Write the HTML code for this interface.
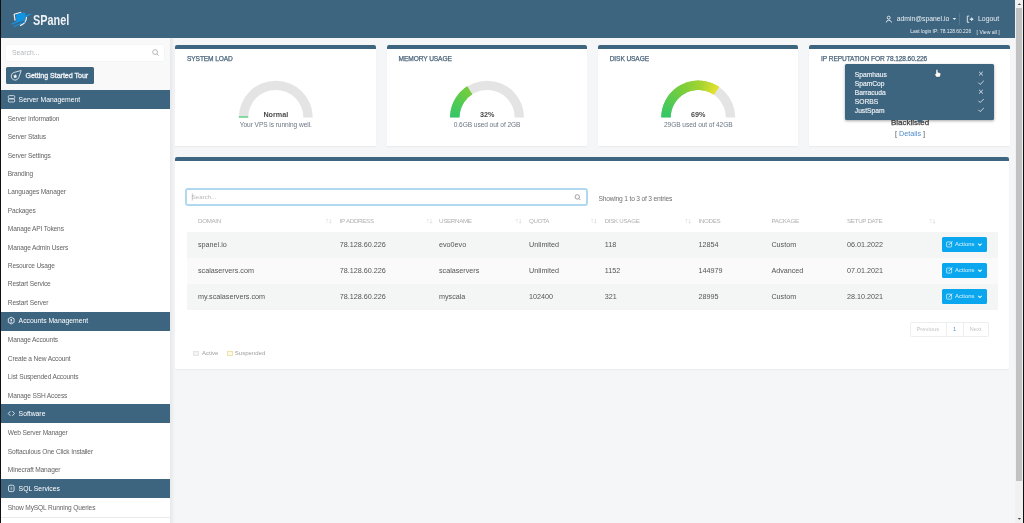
<!DOCTYPE html><html><head><meta charset="utf-8"><style>
*{box-sizing:border-box;margin:0;padding:0}
html,body{width:1024px;height:523px;overflow:hidden}
body{position:relative;will-change:transform;background:#f4f6f7;font-family:"Liberation Sans",sans-serif;color:#555}
.a{position:absolute;white-space:nowrap}
.mh{position:absolute;left:1px;width:169px;height:18.55px;background:#3e6580;color:#fff;font-size:6.8px;line-height:18.55px;padding-left:17.6px;padding-top:0.8px;white-space:nowrap}
.mi{position:absolute;left:1px;width:169px;height:18.55px;color:#606060;font-size:6.35px;line-height:18.55px;padding-left:6.8px;padding-top:1.2px;white-space:nowrap}
.card{position:absolute;top:45px;width:200.4px;height:100.7px;background:#fff;border-radius:2px 2px 0 0;overflow:hidden;box-shadow:0 0.5px 1.5px rgba(0,0,0,.05)}
.bar{position:absolute;left:0;top:0;width:100%;height:4px;background:#3e6580}
.ct{position:absolute;left:11.7px;top:10.2px;font-size:6.6px;letter-spacing:-0.1px;font-weight:400;-webkit-text-stroke:0.25px #4c667b;color:#4c667b;white-space:nowrap}
.th{position:absolute;top:217.4px;font-size:6.2px;letter-spacing:-0.3px;color:#b0b0b0;white-space:nowrap}
.td{position:absolute;font-size:7.2px;color:#555;white-space:nowrap}
.row{position:absolute;left:186.6px;width:811.6px}
.btn{position:absolute;left:942.3px;width:44.8px;height:14.7px;background:#0aa7ee;border-radius:1.5px;color:#fff}
.gv{position:absolute;font-size:7.2px;font-weight:700;color:#4a4a4a;white-space:nowrap;text-align:center;width:100px}
.gs{position:absolute;font-size:6.6px;letter-spacing:-0.07px;color:#6b7784;white-space:nowrap;text-align:center;width:120px}
</style></head><body>
<div class="a" style="left:0;top:0;width:1024px;height:38px;background:#3e6580"></div>
<div class="a" style="left:33.2px;top:11.6px;font-size:14px;font-weight:700;color:#eef2f5;transform:scaleX(0.775);transform-origin:0 0">SPanel</div>
<div class="a" style="left:896.7px;top:15.3px;font-size:6.8px;color:#e8eef2">admin@spanel.io</div>
<div class="a" style="left:978px;top:15.3px;font-size:6.9px;color:#e8eef2">Logout</div>
<div class="a" style="left:910.3px;top:29.2px;font-size:4.9px;color:#e8eef2">Last login IP: 78.128.60.226</div>
<div class="a" style="left:976.6px;top:29.2px;font-size:5.1px;color:#e8eef2">[ View all ]</div>
<div class="a" style="left:959px;top:12.8px;width:0.6px;height:12.6px;background:#547790"></div>
<div class="a" style="left:1px;top:38px;width:169px;height:485px;background:#f9f9f9"></div>
<div class="a" style="left:6px;top:44.5px;width:158.4px;height:16px;background:#fff;border-radius:2px;box-shadow:0 0 0 0.5px #f0f1f2"></div>
<div class="a" style="left:12px;top:48.8px;font-size:6.85px;color:#b3b7bb">Search...</div>
<div class="a" style="left:5.9px;top:67.2px;width:88.1px;height:16.4px;background:#3e6580;border-radius:1.5px"></div>
<div class="a" style="left:25.4px;top:71.8px;font-size:7.15px;letter-spacing:-0.05px;font-weight:400;-webkit-text-stroke:0.3px #f0f3f5;color:#f0f3f5">Getting Started Tour</div>
<div class="a" style="left:1px;top:90px;width:169px;height:433px;background:#fff"></div>
<div class="a" style="left:1px;top:89.70px;width:169px;height:19.15px;background:#3e6580"></div>
<div class="a" style="left:18.6px;top:95.50px;font-size:6.8px;color:#fff">Server Management</div>
<div class="a" style="left:7.8px;top:114.65px;font-size:6.6px;letter-spacing:-0.15px;color:#646464">Server Information</div>
<div class="a" style="left:7.8px;top:133.07px;font-size:6.6px;letter-spacing:-0.15px;color:#646464">Server Status</div>
<div class="a" style="left:7.8px;top:151.50px;font-size:6.6px;letter-spacing:-0.15px;color:#646464">Server Settings</div>
<div class="a" style="left:7.8px;top:169.92px;font-size:6.6px;letter-spacing:-0.15px;color:#646464">Branding</div>
<div class="a" style="left:7.8px;top:188.34px;font-size:6.6px;letter-spacing:-0.15px;color:#646464">Languages Manager</div>
<div class="a" style="left:7.8px;top:206.76px;font-size:6.6px;letter-spacing:-0.15px;color:#646464">Packages</div>
<div class="a" style="left:7.8px;top:225.19px;font-size:6.6px;letter-spacing:-0.15px;color:#646464">Manage API Tokens</div>
<div class="a" style="left:7.8px;top:243.61px;font-size:6.6px;letter-spacing:-0.15px;color:#646464">Manage Admin Users</div>
<div class="a" style="left:7.8px;top:262.03px;font-size:6.6px;letter-spacing:-0.15px;color:#646464">Resource Usage</div>
<div class="a" style="left:7.8px;top:280.45px;font-size:6.6px;letter-spacing:-0.15px;color:#646464">Restart Service</div>
<div class="a" style="left:7.8px;top:298.88px;font-size:6.6px;letter-spacing:-0.15px;color:#646464">Restart Server</div>
<div class="a" style="left:1px;top:311.50px;width:169px;height:19.15px;background:#3e6580"></div>
<div class="a" style="left:18.6px;top:317.30px;font-size:6.8px;color:#fff">Accounts Management</div>
<div class="a" style="left:7.8px;top:336.45px;font-size:6.6px;letter-spacing:-0.15px;color:#646464">Manage Accounts</div>
<div class="a" style="left:7.8px;top:354.86px;font-size:6.6px;letter-spacing:-0.15px;color:#646464">Create a New Account</div>
<div class="a" style="left:7.8px;top:373.28px;font-size:6.6px;letter-spacing:-0.15px;color:#646464">List Suspended Accounts</div>
<div class="a" style="left:7.8px;top:391.69px;font-size:6.6px;letter-spacing:-0.15px;color:#646464">Manage SSH Access</div>
<div class="a" style="left:1px;top:404.30px;width:169px;height:19.15px;background:#3e6580"></div>
<div class="a" style="left:18.6px;top:410.10px;font-size:6.8px;color:#fff">Software</div>
<div class="a" style="left:7.8px;top:429.25px;font-size:6.6px;letter-spacing:-0.15px;color:#646464">Web Server Manager</div>
<div class="a" style="left:7.8px;top:447.87px;font-size:6.6px;letter-spacing:-0.15px;color:#646464">Softaculous One Click Installer</div>
<div class="a" style="left:7.8px;top:466.48px;font-size:6.6px;letter-spacing:-0.15px;color:#646464">Minecraft Manager</div>
<div class="a" style="left:1px;top:479.30px;width:169px;height:19.15px;background:#3e6580"></div>
<div class="a" style="left:18.6px;top:485.10px;font-size:6.8px;color:#fff">SQL Services</div>
<div class="a" style="left:7.8px;top:504.25px;font-size:6.6px;letter-spacing:-0.15px;color:#646464">Show MySQL Running Queries</div>
<div class="a" style="left:1px;top:516.85px;width:169px;height:0.7px;background:#e9ebed"></div>
<div class="a" style="left:170px;top:38px;width:5px;height:485px;background:linear-gradient(to right,#e6e8ea,#f4f6f7)"></div>
<div class="card" style="left:175.3px"><div class="bar"></div><div class="ct">SYSTEM LOAD</div></div>
<div class="card" style="left:386.9px"><div class="bar"></div><div class="ct">MEMORY USAGE</div></div>
<div class="card" style="left:598.0px"><div class="bar"></div><div class="ct">DISK USAGE</div></div>
<div class="card" style="left:809.4px"><div class="bar"></div><div class="ct">IP REPUTATION FOR 78.128.60.226</div></div>
<svg class="a" style="left:0;top:0" width="1024" height="523" viewBox="0 0 1024 523"><path d="M238.80,117.60 A37.0,37.0 0 0 1 312.80,117.60 L303.40,117.60 A27.6,27.6 0 0 0 248.20,117.60 Z" fill="#e4e4e4"/><rect x="238.80" y="116.30" width="9.40" height="1.3" fill="#4fd07a"/></svg>
<svg class="a" style="left:0;top:0" width="1024" height="523" viewBox="0 0 1024 523"><path d="M450.10,117.60 A37.0,37.0 0 0 1 524.10,117.60 L514.70,117.60 A27.6,27.6 0 0 0 459.50,117.60 Z" fill="#e4e4e4"/><path d="M450.10,117.60 A37.0,37.0 0 0 1 450.17,115.30 L459.55,115.89 A27.6,27.6 0 0 0 459.50,117.60 Z" fill="rgb(51, 199, 105)"/><path d="M450.12,116.27 A37.0,37.0 0 0 1 450.28,113.98 L459.63,114.90 A27.6,27.6 0 0 0 459.52,116.61 Z" fill="rgb(54, 199, 104)"/><path d="M450.20,114.95 A37.0,37.0 0 0 1 450.43,112.66 L459.75,113.92 A27.6,27.6 0 0 0 459.57,115.62 Z" fill="rgb(56, 200, 102)"/><path d="M450.31,113.62 A37.0,37.0 0 0 1 450.63,111.35 L459.90,112.94 A27.6,27.6 0 0 0 459.66,114.63 Z" fill="rgb(59, 200, 100)"/><path d="M450.48,112.30 A37.0,37.0 0 0 1 450.88,110.04 L460.08,111.96 A27.6,27.6 0 0 0 459.78,113.65 Z" fill="rgb(61, 200, 99)"/><path d="M450.69,110.99 A37.0,37.0 0 0 1 451.17,108.75 L460.30,111.00 A27.6,27.6 0 0 0 459.94,112.67 Z" fill="rgb(64, 200, 97)"/><path d="M450.96,109.69 A37.0,37.0 0 0 1 451.52,107.46 L460.56,110.04 A27.6,27.6 0 0 0 460.14,111.70 Z" fill="rgb(66, 201, 95)"/><path d="M451.26,108.40 A37.0,37.0 0 0 1 451.90,106.19 L460.84,109.09 A27.6,27.6 0 0 0 460.37,110.74 Z" fill="rgb(69, 201, 94)"/><path d="M451.62,107.12 A37.0,37.0 0 0 1 452.33,104.94 L461.17,108.15 A27.6,27.6 0 0 0 460.63,109.78 Z" fill="rgb(71, 201, 92)"/><path d="M452.01,105.85 A37.0,37.0 0 0 1 452.81,103.70 L461.52,107.23 A27.6,27.6 0 0 0 460.93,108.84 Z" fill="rgb(73, 201, 90)"/><path d="M452.46,104.60 A37.0,37.0 0 0 1 453.33,102.47 L461.91,106.32 A27.6,27.6 0 0 0 461.26,107.90 Z" fill="rgb(76, 202, 89)"/><path d="M452.95,103.36 A37.0,37.0 0 0 1 453.90,101.27 L462.33,105.42 A27.6,27.6 0 0 0 461.62,106.98 Z" fill="rgb(78, 202, 87)"/><path d="M453.48,102.15 A37.0,37.0 0 0 1 454.50,100.09 L462.79,104.54 A27.6,27.6 0 0 0 462.02,106.07 Z" fill="rgb(81, 202, 85)"/><path d="M454.06,100.95 A37.0,37.0 0 0 1 455.15,98.93 L463.27,103.68 A27.6,27.6 0 0 0 462.45,105.18 Z" fill="rgb(83, 202, 84)"/><path d="M454.68,99.78 A37.0,37.0 0 0 1 455.85,97.80 L463.79,102.83 A27.6,27.6 0 0 0 462.91,104.30 Z" fill="rgb(86, 202, 82)"/><path d="M455.34,98.62 A37.0,37.0 0 0 1 456.58,96.69 L464.33,102.00 A27.6,27.6 0 0 0 463.41,103.44 Z" fill="rgb(88, 203, 80)"/><path d="M456.04,97.49 A37.0,37.0 0 0 1 457.35,95.61 L464.91,101.19 A27.6,27.6 0 0 0 463.93,102.60 Z" fill="rgb(91, 203, 79)"/><path d="M456.78,96.39 A37.0,37.0 0 0 1 458.15,94.55 L465.51,100.41 A27.6,27.6 0 0 0 464.48,101.78 Z" fill="rgb(93, 203, 77)"/><path d="M457.56,95.32 A37.0,37.0 0 0 1 459.00,93.53 L466.14,99.64 A27.6,27.6 0 0 0 465.07,100.98 Z" fill="rgb(96, 203, 76)"/><path d="M458.38,94.27 A37.0,37.0 0 0 1 459.88,92.54 L466.80,98.90 A27.6,27.6 0 0 0 465.68,100.20 Z" fill="rgb(98, 204, 74)"/><path d="M459.24,93.26 A37.0,37.0 0 0 1 460.80,91.57 L467.48,98.19 A27.6,27.6 0 0 0 466.32,99.44 Z" fill="rgb(101, 204, 72)"/><path d="M460.13,92.27 A37.0,37.0 0 0 1 461.75,90.65 L468.19,97.49 A27.6,27.6 0 0 0 466.98,98.71 Z" fill="rgb(103, 204, 71)"/><path d="M461.05,91.32 A37.0,37.0 0 0 1 462.74,89.75 L468.93,96.83 A27.6,27.6 0 0 0 467.67,98.00 Z" fill="rgb(106, 204, 69)"/><path d="M462.01,90.40 A37.0,37.0 0 0 1 463.75,88.90 L469.68,96.19 A27.6,27.6 0 0 0 468.39,97.31 Z" fill="rgb(108, 205, 67)"/><path d="M463.01,89.52 A37.0,37.0 0 0 1 464.80,88.08 L470.46,95.58 A27.6,27.6 0 0 0 469.13,96.65 Z" fill="rgb(110, 205, 66)"/><path d="M464.03,88.67 A37.0,37.0 0 0 1 465.87,87.30 L471.26,95.00 A27.6,27.6 0 0 0 469.89,96.02 Z" fill="rgb(113, 205, 64)"/><path d="M465.08,87.86 A37.0,37.0 0 0 1 466.97,86.55 L472.09,94.44 A27.6,27.6 0 0 0 470.68,95.42 Z" fill="rgb(115, 205, 62)"/><path d="M466.17,87.09 A37.0,37.0 0 0 1 467.27,86.36 L472.31,94.30 A27.6,27.6 0 0 0 471.48,94.84 Z" fill="rgb(118, 206, 61)"/></svg>
<svg class="a" style="left:0;top:0" width="1024" height="523" viewBox="0 0 1024 523"><path d="M661.30,117.60 A37.0,37.0 0 0 1 735.30,117.60 L725.90,117.60 A27.6,27.6 0 0 0 670.70,117.60 Z" fill="#e4e4e4"/><path d="M661.30,117.60 A37.0,37.0 0 0 1 661.37,115.34 L670.75,115.91 A27.6,27.6 0 0 0 670.70,117.60 Z" fill="rgb(51, 199, 105)"/><path d="M661.32,116.31 A37.0,37.0 0 0 1 661.47,114.05 L670.83,114.95 A27.6,27.6 0 0 0 670.72,116.64 Z" fill="rgb(54, 199, 104)"/><path d="M661.39,115.01 A37.0,37.0 0 0 1 661.62,112.76 L670.94,113.99 A27.6,27.6 0 0 0 670.77,115.67 Z" fill="rgb(56, 200, 102)"/><path d="M661.50,113.73 A37.0,37.0 0 0 1 661.81,111.49 L671.08,113.04 A27.6,27.6 0 0 0 670.85,114.71 Z" fill="rgb(58, 200, 100)"/><path d="M661.66,112.44 A37.0,37.0 0 0 1 662.04,110.21 L671.26,112.09 A27.6,27.6 0 0 0 670.97,113.75 Z" fill="rgb(61, 200, 99)"/><path d="M661.86,111.16 A37.0,37.0 0 0 1 662.33,108.95 L671.46,111.15 A27.6,27.6 0 0 0 671.12,112.80 Z" fill="rgb(63, 200, 97)"/><path d="M662.11,109.90 A37.0,37.0 0 0 1 662.65,107.70 L671.71,110.21 A27.6,27.6 0 0 0 671.31,111.85 Z" fill="rgb(66, 201, 96)"/><path d="M662.40,108.63 A37.0,37.0 0 0 1 663.02,106.46 L671.98,109.29 A27.6,27.6 0 0 0 671.52,110.91 Z" fill="rgb(68, 201, 94)"/><path d="M662.74,107.39 A37.0,37.0 0 0 1 663.43,105.23 L672.29,108.37 A27.6,27.6 0 0 0 671.77,109.98 Z" fill="rgb(70, 201, 92)"/><path d="M663.12,106.15 A37.0,37.0 0 0 1 663.88,104.02 L672.63,107.47 A27.6,27.6 0 0 0 672.06,109.06 Z" fill="rgb(73, 201, 91)"/><path d="M663.54,104.93 A37.0,37.0 0 0 1 664.38,102.83 L673.00,106.58 A27.6,27.6 0 0 0 672.37,108.15 Z" fill="rgb(75, 201, 89)"/><path d="M664.00,103.72 A37.0,37.0 0 0 1 664.92,101.65 L673.40,105.70 A27.6,27.6 0 0 0 672.72,107.25 Z" fill="rgb(78, 202, 88)"/><path d="M664.51,102.53 A37.0,37.0 0 0 1 665.49,100.49 L673.83,104.84 A27.6,27.6 0 0 0 673.09,106.36 Z" fill="rgb(80, 202, 86)"/><path d="M665.06,101.36 A37.0,37.0 0 0 1 666.11,99.35 L674.29,103.99 A27.6,27.6 0 0 0 673.50,105.48 Z" fill="rgb(82, 202, 84)"/><path d="M665.64,100.20 A37.0,37.0 0 0 1 666.77,98.24 L674.78,103.16 A27.6,27.6 0 0 0 673.94,104.62 Z" fill="rgb(85, 202, 83)"/><path d="M666.27,99.07 A37.0,37.0 0 0 1 667.46,97.15 L675.30,102.35 A27.6,27.6 0 0 0 674.41,103.78 Z" fill="rgb(87, 203, 81)"/><path d="M666.94,97.96 A37.0,37.0 0 0 1 668.20,96.09 L675.85,101.55 A27.6,27.6 0 0 0 674.91,102.95 Z" fill="rgb(90, 203, 80)"/><path d="M667.65,96.88 A37.0,37.0 0 0 1 668.97,95.05 L676.42,100.78 A27.6,27.6 0 0 0 675.43,102.14 Z" fill="rgb(92, 203, 78)"/><path d="M668.39,95.82 A37.0,37.0 0 0 1 669.78,94.03 L677.02,100.02 A27.6,27.6 0 0 0 675.99,101.35 Z" fill="rgb(94, 203, 76)"/><path d="M669.17,94.79 A37.0,37.0 0 0 1 670.62,93.05 L677.65,99.29 A27.6,27.6 0 0 0 676.57,100.58 Z" fill="rgb(97, 204, 75)"/><path d="M669.98,93.78 A37.0,37.0 0 0 1 671.49,92.10 L678.30,98.58 A27.6,27.6 0 0 0 677.18,99.84 Z" fill="rgb(99, 204, 73)"/><path d="M670.83,92.81 A37.0,37.0 0 0 1 672.40,91.18 L678.98,97.89 A27.6,27.6 0 0 0 677.81,99.11 Z" fill="rgb(102, 204, 72)"/><path d="M671.72,91.86 A37.0,37.0 0 0 1 673.34,90.29 L679.68,97.23 A27.6,27.6 0 0 0 678.47,98.40 Z" fill="rgb(104, 204, 70)"/><path d="M672.63,90.95 A37.0,37.0 0 0 1 674.31,89.43 L680.40,96.59 A27.6,27.6 0 0 0 679.15,97.72 Z" fill="rgb(106, 204, 68)"/><path d="M673.58,90.07 A37.0,37.0 0 0 1 675.31,88.61 L681.15,95.98 A27.6,27.6 0 0 0 679.86,97.06 Z" fill="rgb(109, 205, 67)"/><path d="M674.56,89.22 A37.0,37.0 0 0 1 676.34,87.83 L681.92,95.39 A27.6,27.6 0 0 0 680.59,96.43 Z" fill="rgb(111, 205, 65)"/><path d="M675.56,88.41 A37.0,37.0 0 0 1 677.39,87.08 L682.70,94.83 A27.6,27.6 0 0 0 681.34,95.83 Z" fill="rgb(114, 205, 64)"/><path d="M676.60,87.63 A37.0,37.0 0 0 1 678.47,86.36 L683.51,94.30 A27.6,27.6 0 0 0 682.11,95.25 Z" fill="rgb(116, 205, 62)"/><path d="M677.66,86.89 A37.0,37.0 0 0 1 679.57,85.69 L684.33,93.80 A27.6,27.6 0 0 0 682.90,94.69 Z" fill="rgb(119, 206, 60)"/><path d="M678.74,86.19 A37.0,37.0 0 0 1 680.70,85.05 L685.17,93.32 A27.6,27.6 0 0 0 683.71,94.17 Z" fill="rgb(121, 206, 59)"/><path d="M679.85,85.53 A37.0,37.0 0 0 1 681.85,84.46 L686.03,92.88 A27.6,27.6 0 0 0 684.54,93.67 Z" fill="rgb(123, 206, 58)"/><path d="M680.99,84.90 A37.0,37.0 0 0 1 683.02,83.90 L686.90,92.46 A27.6,27.6 0 0 0 685.39,93.21 Z" fill="rgb(126, 207, 57)"/><path d="M682.14,84.32 A37.0,37.0 0 0 1 684.20,83.39 L687.79,92.08 A27.6,27.6 0 0 0 686.25,92.77 Z" fill="rgb(128, 207, 57)"/><path d="M683.31,83.77 A37.0,37.0 0 0 1 685.41,82.92 L688.68,91.73 A27.6,27.6 0 0 0 687.12,92.37 Z" fill="rgb(131, 207, 56)"/><path d="M684.51,83.27 A37.0,37.0 0 0 1 686.63,82.49 L689.59,91.41 A27.6,27.6 0 0 0 688.01,91.99 Z" fill="rgb(133, 208, 56)"/><path d="M685.71,82.81 A37.0,37.0 0 0 1 687.86,82.10 L690.51,91.12 A27.6,27.6 0 0 0 688.91,91.65 Z" fill="rgb(136, 208, 55)"/><path d="M686.94,82.39 A37.0,37.0 0 0 1 689.11,81.76 L691.45,90.86 A27.6,27.6 0 0 0 689.82,91.33 Z" fill="rgb(138, 208, 55)"/><path d="M688.18,82.01 A37.0,37.0 0 0 1 690.37,81.46 L692.38,90.64 A27.6,27.6 0 0 0 690.75,91.05 Z" fill="rgb(141, 209, 55)"/><path d="M689.43,81.68 A37.0,37.0 0 0 1 691.64,81.20 L693.33,90.45 A27.6,27.6 0 0 0 691.68,90.81 Z" fill="rgb(143, 209, 54)"/><path d="M690.69,81.39 A37.0,37.0 0 0 1 692.91,80.99 L694.28,90.29 A27.6,27.6 0 0 0 692.62,90.59 Z" fill="rgb(145, 209, 54)"/><path d="M691.96,81.15 A37.0,37.0 0 0 1 694.20,80.83 L695.24,90.17 A27.6,27.6 0 0 0 693.57,90.41 Z" fill="rgb(148, 210, 53)"/><path d="M693.24,80.95 A37.0,37.0 0 0 1 695.48,80.71 L696.20,90.08 A27.6,27.6 0 0 0 694.52,90.26 Z" fill="rgb(150, 210, 53)"/><path d="M694.52,80.79 A37.0,37.0 0 0 1 696.78,80.63 L697.16,90.02 A27.6,27.6 0 0 0 695.48,90.14 Z" fill="rgb(153, 210, 52)"/><path d="M695.81,80.68 A37.0,37.0 0 0 1 698.07,80.60 L698.13,90.00 A27.6,27.6 0 0 0 696.44,90.06 Z" fill="rgb(155, 211, 52)"/><path d="M697.10,80.62 A37.0,37.0 0 0 1 699.36,80.62 L699.09,90.01 A27.6,27.6 0 0 0 697.41,90.01 Z" fill="rgb(158, 211, 51)"/><path d="M698.39,80.60 A37.0,37.0 0 0 1 700.65,80.67 L700.06,90.06 A27.6,27.6 0 0 0 698.37,90.00 Z" fill="rgb(160, 211, 51)"/><path d="M699.69,80.63 A37.0,37.0 0 0 1 701.94,80.78 L701.02,90.13 A27.6,27.6 0 0 0 699.33,90.02 Z" fill="rgb(163, 212, 50)"/><path d="M700.98,80.70 A37.0,37.0 0 0 1 703.23,80.93 L701.98,90.25 A27.6,27.6 0 0 0 700.30,90.07 Z" fill="rgb(165, 212, 50)"/><path d="M702.27,80.81 A37.0,37.0 0 0 1 704.51,81.12 L702.93,90.39 A27.6,27.6 0 0 0 701.26,90.16 Z" fill="rgb(170, 213, 50)"/><path d="M703.55,80.97 A37.0,37.0 0 0 1 705.78,81.36 L703.88,90.57 A27.6,27.6 0 0 0 702.22,90.28 Z" fill="rgb(174, 214, 49)"/><path d="M704.83,81.18 A37.0,37.0 0 0 1 707.04,81.65 L704.82,90.78 A27.6,27.6 0 0 0 703.17,90.43 Z" fill="rgb(179, 215, 49)"/><path d="M706.10,81.43 A37.0,37.0 0 0 1 708.29,81.97 L705.75,91.03 A27.6,27.6 0 0 0 704.12,90.62 Z" fill="rgb(183, 216, 49)"/><path d="M707.36,81.73 A37.0,37.0 0 0 1 709.53,82.35 L706.68,91.30 A27.6,27.6 0 0 0 705.06,90.84 Z" fill="rgb(188, 217, 49)"/><path d="M708.60,82.06 A37.0,37.0 0 0 1 710.76,82.76 L707.59,91.61 A27.6,27.6 0 0 0 705.99,91.09 Z" fill="rgb(192, 218, 48)"/><path d="M709.84,82.45 A37.0,37.0 0 0 1 711.97,83.22 L708.49,91.95 A27.6,27.6 0 0 0 706.91,91.38 Z" fill="rgb(197, 219, 48)"/><path d="M711.06,82.87 A37.0,37.0 0 0 1 713.16,83.72 L709.39,92.32 A27.6,27.6 0 0 0 707.82,91.69 Z" fill="rgb(201, 220, 48)"/><path d="M712.27,83.34 A37.0,37.0 0 0 1 714.34,84.26 L710.26,92.73 A27.6,27.6 0 0 0 708.72,92.04 Z" fill="rgb(206, 221, 47)"/><path d="M713.46,83.85 A37.0,37.0 0 0 1 715.49,84.84 L711.12,93.16 A27.6,27.6 0 0 0 709.61,92.42 Z" fill="rgb(210, 222, 47)"/><path d="M714.63,84.40 A37.0,37.0 0 0 1 716.63,85.46 L711.97,93.62 A27.6,27.6 0 0 0 710.48,92.83 Z" fill="rgb(215, 223, 47)"/><path d="M715.78,84.99 A37.0,37.0 0 0 1 717.74,86.12 L712.80,94.12 A27.6,27.6 0 0 0 711.34,93.27 Z" fill="rgb(219, 224, 47)"/><path d="M716.91,85.62 A37.0,37.0 0 0 1 718.83,86.82 L713.61,94.64 A27.6,27.6 0 0 0 712.18,93.74 Z" fill="rgb(224, 225, 46)"/><path d="M718.01,86.29 A37.0,37.0 0 0 1 719.10,87.00 L713.81,94.77 A27.6,27.6 0 0 0 713.01,94.24 Z" fill="rgb(228, 226, 46)"/></svg>
<div class="gv" style="left:225.80px;top:109.8px">Normal</div>
<div class="gs" style="left:215.80px;top:120.5px">Your VPS is running well.</div>
<div class="gv" style="left:437.10px;top:109.8px">32%</div>
<div class="gs" style="left:427.10px;top:120.5px">0.6GB used out of 2GB</div>
<div class="gv" style="left:648.30px;top:109.8px">69%</div>
<div class="gs" style="left:638.30px;top:120.5px">29GB used out of 42GB</div>
<div class="a" style="left:870px;top:117.5px;width:80px;text-align:center;font-size:8px;color:#3e3e3e;-webkit-text-stroke:0.25px #3e3e3e">Blacklisted</div>
<div class="a" style="left:870px;top:129px;width:80px;text-align:center;font-size:7.2px;color:#555">[ <span style="color:#4f8ccb">Details</span> ]</div>
<div class="a" style="left:845px;top:64px;width:149px;height:56px;background:#3e6580;border-radius:1.5px;box-shadow:0 1px 3px rgba(0,0,0,.35)"></div>
<div class="a" style="left:916.7px;top:120px;width:0;height:0;border-left:3px solid transparent;border-right:3px solid transparent;border-top:3px solid #3e6580"></div>
<div class="a" style="left:854.8px;top:70.60px;font-size:6.7px;color:#eef2f5;-webkit-text-stroke:0.15px #eef2f5">Spamhaus</div>
<div class="a" style="left:854.8px;top:79.65px;font-size:6.7px;color:#eef2f5;-webkit-text-stroke:0.15px #eef2f5">SpamCop</div>
<div class="a" style="left:854.8px;top:88.70px;font-size:6.7px;color:#eef2f5;-webkit-text-stroke:0.15px #eef2f5">Barracuda</div>
<div class="a" style="left:854.8px;top:97.75px;font-size:6.7px;color:#eef2f5;-webkit-text-stroke:0.15px #eef2f5">SORBS</div>
<div class="a" style="left:854.8px;top:106.80px;font-size:6.7px;color:#eef2f5;-webkit-text-stroke:0.15px #eef2f5">JustSpam</div>
<div class="a" style="left:175.3px;top:156.9px;width:834.2px;height:212.5px;background:#fff;border-radius:2px 2px 0 0;overflow:hidden;box-shadow:0 0.5px 1.5px rgba(0,0,0,.05)"><div class="bar"></div></div>
<div class="a" style="left:185.3px;top:187.6px;width:402.6px;height:18.9px;border:2px solid #b0d9ef;border-radius:3px;background:#fff"></div>
<div class="a" style="left:191.8px;top:193.2px;font-size:6.1px;color:#b8b8b8">Search...</div>
<div class="a" style="left:598.4px;top:194.6px;font-size:6.7px;letter-spacing:-0.2px;color:#707070">Showing 1 to 3 of 3 entries</div>
<div class="th" style="left:198px">DOMAIN</div>
<div class="th" style="left:339.7px">IP ADDRESS</div>
<div class="th" style="left:439px">USERNAME</div>
<div class="th" style="left:529px">QUOTA</div>
<div class="th" style="left:604.7px">DISK USAGE</div>
<div class="th" style="left:698.5px">INODES</div>
<div class="th" style="left:771.4px">PACKAGE</div>
<div class="th" style="left:847px">SETUP DATE</div>
<div class="row" style="top:232.2px;height:26.1px;background:#f4f5f5"></div>
<div class="td" style="left:198px;top:239.70px">spanel.io</div>
<div class="td" style="left:339.7px;top:239.70px">78.128.60.226</div>
<div class="td" style="left:439px;top:239.70px">evo0evo</div>
<div class="td" style="left:529px;top:239.70px">Unlimited</div>
<div class="td" style="left:604.7px;top:239.70px">118</div>
<div class="td" style="left:698.5px;top:239.70px">12854</div>
<div class="td" style="left:771.4px;top:239.70px">Custom</div>
<div class="td" style="left:847px;top:239.70px">06.01.2022</div>
<div class="btn" style="top:237.20px"><span class="a" style="left:12.8px;top:4px;font-size:5.9px;color:#def3fd">Actions</span></div>
<div class="row" style="top:258.3px;height:26.1px;background:#fafafa"></div>
<div class="td" style="left:198px;top:265.80px">scalaservers.com</div>
<div class="td" style="left:339.7px;top:265.80px">78.128.60.226</div>
<div class="td" style="left:439px;top:265.80px">scalaservers</div>
<div class="td" style="left:529px;top:265.80px">Unlimited</div>
<div class="td" style="left:604.7px;top:265.80px">1152</div>
<div class="td" style="left:698.5px;top:265.80px">144979</div>
<div class="td" style="left:771.4px;top:265.80px">Advanced</div>
<div class="td" style="left:847px;top:265.80px">07.01.2021</div>
<div class="btn" style="top:263.30px"><span class="a" style="left:12.8px;top:4px;font-size:5.9px;color:#def3fd">Actions</span></div>
<div class="row" style="top:284.4px;height:26.1px;background:#f4f5f5"></div>
<div class="td" style="left:198px;top:291.90px">my.scalaservers.com</div>
<div class="td" style="left:339.7px;top:291.90px">78.128.60.226</div>
<div class="td" style="left:439px;top:291.90px">myscala</div>
<div class="td" style="left:529px;top:291.90px">102400</div>
<div class="td" style="left:604.7px;top:291.90px">321</div>
<div class="td" style="left:698.5px;top:291.90px">28995</div>
<div class="td" style="left:771.4px;top:291.90px">Custom</div>
<div class="td" style="left:847px;top:291.90px">28.10.2021</div>
<div class="btn" style="top:289.40px"><span class="a" style="left:12.8px;top:4px;font-size:5.9px;color:#def3fd">Actions</span></div>
<div class="a" style="left:910.2px;top:321.5px;width:78.4px;height:15.5px;border:0.6px solid #eceeef;border-radius:1.5px"></div>
<div class="a" style="left:946.1px;top:321.5px;width:0.6px;height:15.5px;background:#eceeef"></div>
<div class="a" style="left:963.2px;top:321.5px;width:0.6px;height:15.5px;background:#eceeef"></div>
<div class="a" style="left:916.5px;top:326px;font-size:5.8px;color:#c5c5c5">Previous</div>
<div class="a" style="left:953px;top:326px;font-size:5.8px;color:#5b9ad0">1</div>
<div class="a" style="left:969.5px;top:326px;font-size:5.8px;color:#c5c5c5">Next</div>
<div class="a" style="left:193.3px;top:350.5px;width:6px;height:5.4px;border:0.6px solid #e6e6e6;background:#f3f3f3"></div>
<div class="a" style="left:201.9px;top:350px;font-size:6.05px;color:#a0a0a0">Active</div>
<div class="a" style="left:226.9px;top:350.5px;width:6px;height:5.4px;border:0.7px solid #efe2a6;background:#fdf9e8"></div>
<div class="a" style="left:234.8px;top:350px;font-size:6.05px;color:#a0a0a0">Suspended</div>
<svg class="a" style="left:0;top:0;z-index:20" width="1024" height="523" viewBox="0 0 1024 523"><path d="M21.2,12.3 L14.1,14.2 L15.1,20.6" fill="none" stroke="#f2f4f6" stroke-width="1.15" stroke-linejoin="round"/><path d="M26.5,16.8 Q26.4,23.4 20,25.6" fill="none" stroke="#f2f4f6" stroke-width="1.2"/><path d="M15.9,14.6 L23.6,12.6 L25.6,13 L24.8,20.6 L16.4,22.2 Z" fill="#1194e2"/><path d="M11.4,23.5 L23.5,18.8 L24,20 L12,24.8 Z" fill="#1592e0"/><path d="M13.6,26 L25,21.2 L25.4,22.3 L14.2,26.9 Z" fill="#1592e0"/><path d="M23.8,16.2 L30.3,13.4 L31.1,14.5 L24.4,17.6 Z" fill="#1592e0"/><circle cx="888.7" cy="17.7" r="1.5" fill="none" stroke="#e9eef2" stroke-width="0.9"/><path d="M886.2,22.5 Q886.6,20.2 888.8,20.2 Q891,20.2 891.5,22.5" fill="none" stroke="#e9eef2" stroke-width="0.9"/><path d="M952.6,18 L956.1,18 L954.35,20 Z" fill="#e9eef2"/><path d="M969.2,16.1 L967.3,16.1 L967.3,22.3 L969.2,22.3" fill="none" stroke="#e9eef2" stroke-width="0.9"/><path d="M969.7,19.2 L971.6,19.2" stroke="#e9eef2" stroke-width="1.2"/><path d="M971.2,17.1 L973.6,19.2 L971.2,21.3 Z" fill="#e9eef2"/><circle cx="155.1" cy="52.1" r="2.4" fill="none" stroke="#9a9a9a" stroke-width="0.7"/><path d="M156.9,53.9 L158.6,55.6" stroke="#9a9a9a" stroke-width="0.7"/><path d="M21.2,70.5 L14.08,72.44 A3.9,3.9 0 1 0 18.79,77.48 Z" fill="none" stroke="#e8eef2" stroke-width="0.85" stroke-linejoin="round"/><polygon points="15.20,74.10 15.82,75.55 17.39,75.69 16.20,76.72 16.55,78.26 15.20,77.45 13.85,78.26 14.20,76.72 13.01,75.69 14.58,75.55" fill="#fff"/><rect x="8.3" y="95.60" width="6.4" height="3" rx="1" fill="none" stroke="#e9eef2" stroke-width="0.8"/><rect x="8.3" y="99.00" width="6.4" height="3" rx="1" fill="none" stroke="#e9eef2" stroke-width="0.8"/><path d="M11.2,317.2 L14.1,318.8 L14.1,322.3 L11.2,324 L8.3,322.3 L8.3,318.8 Z" fill="none" stroke="#e9eef2" stroke-width="0.9"/><circle cx="11.2" cy="320" r="0.9" fill="#e9eef2"/><path d="M9.8,322.6 Q11.2,320.6 12.6,322.6" fill="#e9eef2"/><path d="M10.4,411.2 L8.3,413.5 L10.4,415.8 M12.4,411.2 L14.5,413.5 L12.4,415.8" fill="none" stroke="#e9eef2" stroke-width="0.9"/><rect x="8.5" y="485.2" width="5.6" height="6.4" rx="1.5" fill="none" stroke="#e9eef2" stroke-width="0.85"/><path d="M10.5,487.3 L12.2,487.3 M10.5,488.5 L12.2,488.5 M10.5,489.7 L12.2,489.7" stroke="#e9eef2" stroke-width="0.5"/><circle cx="577.3" cy="196.9" r="2.2" fill="none" stroke="#8a8a8a" stroke-width="0.8"/><path d="M578.9,198.5 L580.4,200" stroke="#8a8a8a" stroke-width="0.8"/><rect x="191.9" y="193.3" width="0.45" height="7.2" fill="#8a8a8a"/><path d="M327.05,223.2 L327.05,219 M326.10,220.1 L327.05,219 L328.00,220.1" fill="none" stroke="#e2e2e2" stroke-width="0.65"/><path d="M330.25,219 L330.25,223.2 M329.30,222.1 L330.25,223.2 L331.20,222.1" fill="none" stroke="#d8d8d8" stroke-width="0.65"/><path d="M427.75,223.2 L427.75,219 M426.80,220.1 L427.75,219 L428.70,220.1" fill="none" stroke="#e2e2e2" stroke-width="0.65"/><path d="M430.95,219 L430.95,223.2 M430.00,222.1 L430.95,223.2 L431.90,222.1" fill="none" stroke="#d8d8d8" stroke-width="0.65"/><path d="M517.05,223.2 L517.05,219 M516.10,220.1 L517.05,219 L518.00,220.1" fill="none" stroke="#e2e2e2" stroke-width="0.65"/><path d="M520.25,219 L520.25,223.2 M519.30,222.1 L520.25,223.2 L521.20,222.1" fill="none" stroke="#d8d8d8" stroke-width="0.65"/><path d="M592.25,223.2 L592.25,219 M591.30,220.1 L592.25,219 L593.20,220.1" fill="none" stroke="#e2e2e2" stroke-width="0.65"/><path d="M595.45,219 L595.45,223.2 M594.50,222.1 L595.45,223.2 L596.40,222.1" fill="none" stroke="#d8d8d8" stroke-width="0.65"/><path d="M686.45,223.2 L686.45,219 M685.50,220.1 L686.45,219 L687.40,220.1" fill="none" stroke="#e2e2e2" stroke-width="0.65"/><path d="M689.65,219 L689.65,223.2 M688.70,222.1 L689.65,223.2 L690.60,222.1" fill="none" stroke="#d8d8d8" stroke-width="0.65"/><path d="M930.85,223.2 L930.85,219 M929.90,220.1 L930.85,219 L931.80,220.1" fill="none" stroke="#e2e2e2" stroke-width="0.65"/><path d="M934.05,219 L934.05,223.2 M933.10,222.1 L934.05,223.2 L935.00,222.1" fill="none" stroke="#d8d8d8" stroke-width="0.65"/><path d="M979,71.70 L982.9,75.50 M982.9,71.70 L979,75.50" fill="none" stroke="#f0f3f5" stroke-width="0.8"/><path d="M978.4,82.65 L980.2,84.45 L983.8,80.85" fill="none" stroke="#f0f3f5" stroke-width="0.8"/><path d="M979,89.80 L982.9,93.60 M982.9,89.80 L979,93.60" fill="none" stroke="#f0f3f5" stroke-width="0.8"/><path d="M978.4,100.75 L980.2,102.55 L983.8,98.95" fill="none" stroke="#f0f3f5" stroke-width="0.8"/><path d="M978.4,109.80 L980.2,111.60 L983.8,108.00" fill="none" stroke="#f0f3f5" stroke-width="0.8"/><rect x="946.6" y="241.95" width="5" height="5" rx="0.6" fill="none" stroke="#e6f6fd" stroke-width="0.7"/><path d="M948.6,245.15 L952.3,241.45" stroke="#e6f6fd" stroke-width="0.9"/><path d="M978.2,243.65 L979.9,245.35 L981.6,243.65" fill="none" stroke="#e6f6fd" stroke-width="1.1"/><rect x="946.6" y="268.05" width="5" height="5" rx="0.6" fill="none" stroke="#e6f6fd" stroke-width="0.7"/><path d="M948.6,271.25 L952.3,267.55" stroke="#e6f6fd" stroke-width="0.9"/><path d="M978.2,269.75 L979.9,271.45 L981.6,269.75" fill="none" stroke="#e6f6fd" stroke-width="1.1"/><rect x="946.6" y="294.15" width="5" height="5" rx="0.6" fill="none" stroke="#e6f6fd" stroke-width="0.7"/><path d="M948.6,297.35 L952.3,293.65" stroke="#e6f6fd" stroke-width="0.9"/><path d="M978.2,295.85 L979.9,297.55 L981.6,295.85" fill="none" stroke="#e6f6fd" stroke-width="1.1"/><path d="M936.1,69.6 Q937,69.2 937.8,69.8 L937.9,72.3 L940.3,72.9 Q940.9,73.3 940.6,75 L939.8,77.1 L936.2,77.1 L934.6,74.2 Q934.9,73.6 935.9,74.1 Z" fill="#fafafa" stroke="#2b3a44" stroke-width="0.35"/></svg>
<div class="a" style="left:1015px;top:0;width:8px;height:523px;background:#f1f1f1;z-index:30"></div>
<div class="a" style="left:1016px;top:8px;width:6px;height:472.5px;background:#c2c2c2;z-index:31"></div>
<svg class="a" style="left:1015px;top:0;z-index:32" width="8" height="523"><path d="M2.6,5 L4.4,3.3 L6.2,5 Z" fill="#505050"/><path d="M2.6,518 L4.4,519.7 L6.2,518 Z" fill="#505050"/></svg>
<div class="a" style="left:0;top:0;width:1px;height:523px;background:#111"></div>
<div class="a" style="left:1023px;top:0;width:1px;height:523px;background:#111"></div>
</body></html>
